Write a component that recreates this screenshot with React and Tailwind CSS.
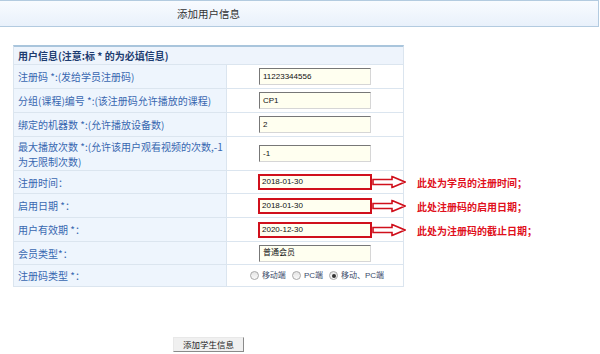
import React from "react";

const cjk = { fontFamily: '"Noto Sans CJK SC", "Noto Sans", sans-serif' };
const small = { fontFamily: '"Liberation Sans", "Noto Sans CJK SC", sans-serif' };

const rows = [
  { label: "注册码 *:(发给学员注册码)", value: "11223344556", h: "h-[24px]" },
  { label: "分组(课程)编号 *:(该注册码允许播放的课程)", value: "CP1", h: "h-[24px]" },
  { label: "绑定的机器数 *:(允许播放设备数)", value: "2", h: "h-[24px]" },
  {
    label: (
      <>
        最大播放次数 *:(允许该用户观看视频的次数,-1
        <br />
        为无限制次数)
      </>
    ),
    value: "-1",
    h: "h-[34px]",
  },
  { label: "注册时间：", value: "2018-01-30", red: true, note: "此处为学员的注册时间；", h: "h-[23px]" },
  { label: "启用日期 *：", value: "2018-01-30", red: true, note: "此处注册码的启用日期；", h: "h-[24px]" },
  { label: "用户有效期 *：", value: "2020-12-30", red: true, note: "此处为注册码的截止日期；", h: "h-[24px]" },
  { label: "会员类型*：", value: "普通会员", h: "h-[23px]" },
];

const Arrow = () => (
  <svg width="34" height="13" viewBox="0 0 34 13">
    <path
      d="M1 4 H20 V1 L33 6.5 L20 12 V9 H1 Z"
      fill="#ffffff"
      stroke="#d0101c"
      strokeWidth="1.6"
      strokeLinejoin="miter"
    />
  </svg>
);

const Radio = ({ checked, label }) => (
  <span className="flex items-center gap-[3px]">
    <span className="w-[9px] h-[9px] rounded-full border border-[#a8a8a8] bg-gradient-to-b from-[#e4e4e4] to-[#fafafa] flex items-center justify-center">
      {checked && <span className="w-[4px] h-[4px] rounded-full bg-[#333]" />}
    </span>
    <span className="text-[8px] text-[#3a4a6a]" style={small}>{label}</span>
  </span>
);

const App = () => {
  return (
    <div className="w-[600px] h-[354px] bg-white overflow-hidden" style={cjk}>
      {/* Title bar */}
      <div className="h-[27px] w-[599px] border-t border-b border-r border-[#b3cbe0] bg-gradient-to-b from-[#f8fbff] to-[#e9f1fb] flex items-center pl-[177px]">
        <span className="text-[10.5px] text-[#333]">添加用户信息</span>
      </div>

      {/* Form table */}
      <div className="ml-[13px] mt-[18px] w-[391px] border-t-2 border-t-[#a9c5dc] border-l border-r border-b border-[#dbe5ef]">
        <div className="h-[18px] bg-[#eef4fc] border-b border-[#dbe5ef] flex items-center pl-[4px]">
          <span className="text-[10px] font-bold text-[#1d3c70]">用户信息(注意:标 * 的为必填信息)</span>
        </div>

        {rows.map((r, i) => (
          <div key={i} className={`grid grid-cols-[213px_176px] border-b border-[#dbe5ef] ${r.h}`}>
            <div className="bg-[#eef5fd] border-r border-[#dbe5ef] flex items-center pl-[4px] pr-[4px]">
              <span className="text-[10px] leading-[15px] text-[#3867b0] whitespace-nowrap">{r.label}</span>
            </div>
            <div className="relative flex items-center justify-center">
              {r.red ? (
                <div className="w-[114px] h-[16px] border-2 border-[#d0101c] bg-[#fffff0] flex items-center pl-[2px]">
                  <span className="text-[8px] text-[#111]" style={small}>{r.value}</span>
                </div>
              ) : (
                <div className="w-[112px] h-[17px] border border-t-[#777] border-l-[#777] border-r-[#d6d6d6] border-b-[#d6d6d6] bg-[#fffff0] flex items-center pl-[3px]">
                  <span className="text-[8px] text-[#111]" style={small}>{r.value}</span>
                </div>
              )}
              {r.note && (
                <div className="absolute left-[145px] top-1/2 -translate-y-1/2 flex items-center gap-[11px] whitespace-nowrap">
                  <Arrow />
                  <span className="text-[10px] font-bold text-[#e0101c]">{r.note}</span>
                </div>
              )}
            </div>
          </div>
        ))}

        <div className="grid grid-cols-[213px_176px] h-[21px]">
          <div className="bg-[#eef5fd] border-r border-[#dbe5ef] flex items-center pl-[4px]">
            <span className="text-[10px] text-[#3867b0]">注册码类型 *：</span>
          </div>
          <div className="flex items-center justify-center gap-[6px] pl-[4px]">
            <Radio label="移动端" />
            <Radio label="PC端" />
            <Radio checked label="移动、PC端" />
          </div>
        </div>
      </div>

      {/* Submit */}
      <div className="mt-[50px] pl-[173px]">
        <button className="w-[71px] h-[15px] border border-t-[#e8e8e8] border-l-[#e8e8e8] border-r-[#8a8a8a] border-b-[#8a8a8a] bg-[#f0f0f0] text-[8.5px] text-[#222] flex items-center justify-center">
          添加学生信息
        </button>
      </div>
    </div>
  );
};

export default App;
